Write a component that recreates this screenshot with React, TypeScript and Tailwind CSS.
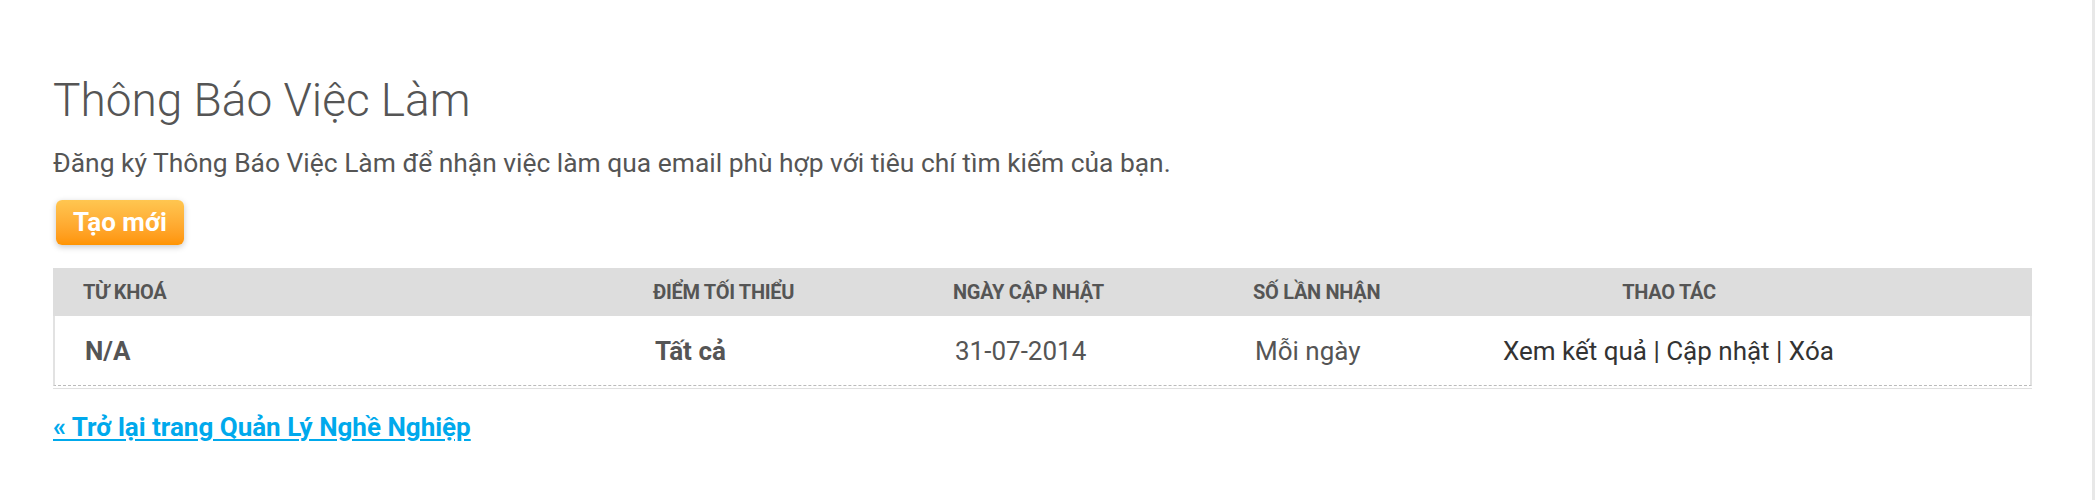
const columns = [
  { label: 'Từ khoá', value: 'N/A', className: 'font-bold text-[#555]' },
  { label: 'Điểm tối thiểu', value: 'Tất cả', className: 'font-bold text-[#555]' },
  { label: 'Ngày cập nhật', value: '31-07-2014', className: 'text-[#555]' },
  { label: 'Số lần nhận', value: 'Mỗi ngày', className: 'text-[#555]' },
];

export default function App() {
  return (
    <div
      className="min-h-[500px] bg-white border-r-[3px] border-[#e8e8e8] pl-[53px] pr-[60px] pt-[73px]"
      style={{ fontFamily: 'Roboto, "Noto Sans", "Liberation Sans", sans-serif' }}
    >
      {/* Heading */}
      <h1 className="text-[46px] leading-[54px] font-light text-[#555]">Thông Báo Việc Làm</h1>
      <p className="mt-[21px] text-[26.4px] leading-[30px] text-[#555]">
        Đăng ký Thông Báo Việc Làm để nhận việc làm qua email phù hợp với tiêu chí tìm kiếm của bạn.
      </p>

      <button className="mt-[22px] ml-[3px] flex h-[45px] w-[128px] items-center justify-center rounded-[6px] bg-gradient-to-b from-[#ffc650] to-[#ff9400] text-[26px] font-bold text-white shadow-[0_2px_6px_rgba(0,0,0,0.22)]">
        Tạo mới
      </button>

      {/* Alerts table */}
      <div className="mt-[23px] border-b border-[#e0e0e0] pb-[2px]">
        <div className="grid h-[48px] grid-cols-[570px_300px_300px_250px_392px_1fr] items-center bg-[#dddddd] text-[20px] leading-[24px] font-bold uppercase tracking-[-0.3px] text-[#555]">
          {columns.map(col => (
            <div key={col.label} className="pl-[30px]">
              {col.label}
            </div>
          ))}
          <div className="text-center">Thao tác</div>
          <div />
        </div>
        <div className="grid h-[70px] grid-cols-[570px_300px_300px_250px_392px_1fr] items-center border-x-2 border-b border-x-[#e2e2e2] border-b-[#bbbbbb] [border-bottom-style:dashed] bg-white text-[26px] leading-[30px]">
          {columns.map(col => (
            <div key={col.label} className={`pl-[30px] ${col.className}`}>
              {col.value}
            </div>
          ))}
          <div className="pl-[28px] whitespace-nowrap text-[#333]">Xem kết quả | Cập nhật | Xóa</div>
          <div />
        </div>
      </div>

      <a href="#" className="mt-[23px] inline-block text-[26px] leading-[30px] font-bold text-[#00a9ec] underline underline-offset-[3px]">
        « Trở lại trang Quản Lý Nghề Nghiệp
      </a>
    </div>
  );
}
